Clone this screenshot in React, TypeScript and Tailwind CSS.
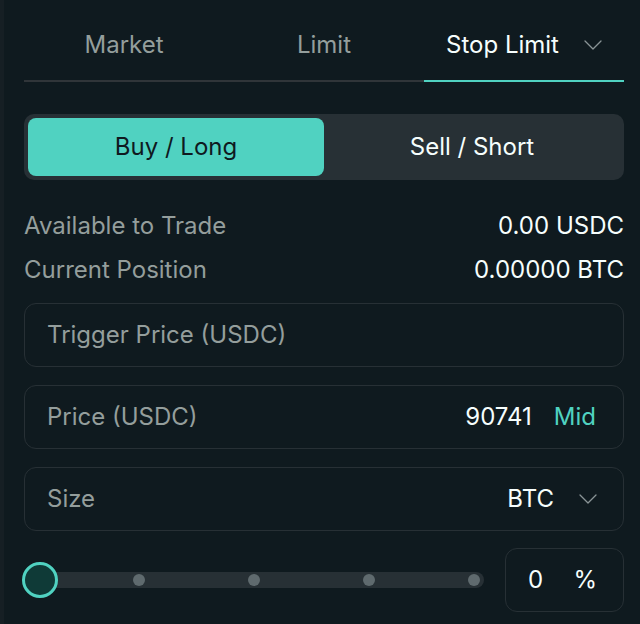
const Chevron = () => (
  <svg width="18" height="10" viewBox="0 0 18 10" fill="none" className="shrink-0">
    <path d="M1 1l8 8 8-8" stroke="#8a9496" strokeWidth="1.3" strokeLinecap="round" strokeLinejoin="round" />
  </svg>
)

const tabs = ["Market", "Limit", "Stop Limit"]

export default function App() {
  return (
    <div
      className="w-[640px] h-[624px] bg-[#0f1a1f] border-l-4 border-[#161f24] pl-5 pr-4 text-[24px] text-[#f6fefd] overflow-hidden"
      style={{ fontFamily: "Inter, 'Liberation Sans', sans-serif" }}
    >
      <div className="flex">
        {tabs.map((t, i) => {
          const active = i === 2
          return (
            <div
              key={t}
              className={
                active
                  ? "flex-1 h-[82px] pt-[10px] flex items-center justify-center gap-[25px] border-b-2 border-[#50d2c1] text-[#f6fefd]"
                  : "flex-1 h-[82px] pt-[10px] flex items-center justify-center border-b-2 border-[#303539] text-[#949e9c]"
              }
            >
              <span>{t}</span>
              {active && <Chevron />}
            </div>
          )
        })}
      </div>

      <div className="mt-8 h-[66px] p-1 rounded-[10px] bg-[#273035] flex">
        <div className="flex-1 rounded-lg bg-[#50d2c1] text-[#0f1a1f] flex items-center justify-center">
          Buy / Long
        </div>
        <div className="flex-1 rounded-lg flex items-center justify-center">Sell / Short</div>
      </div>

      <div className="mt-6">
        <div className="h-11 flex items-center justify-between">
          <span className="text-[#949e9c]">Available to Trade</span>
          <span>0.00 USDC</span>
        </div>
        <div className="h-11 flex items-center justify-between">
          <span className="text-[#949e9c]">Current Position</span>
          <span>0.00000 BTC</span>
        </div>
      </div>

      <div className="mt-[11px] flex flex-col gap-[18px]">
        <div className="h-16 rounded-xl border border-[#273035] flex items-center pl-[22px] pr-[26px]">
          <span className="text-[#949e9c]">Trigger Price (USDC)</span>
        </div>
        <div className="h-16 rounded-xl border border-[#273035] flex items-center justify-between pl-[22px] pr-[27px]">
          <span className="text-[#949e9c]">Price (USDC)</span>
          <div className="flex items-center gap-[22px]">
            <span>90741</span>
            <span className="text-[#50d2c1]">Mid</span>
          </div>
        </div>
        <div className="h-16 rounded-xl border border-[#273035] flex items-center justify-between pl-[22px] pr-[26px]">
          <span className="text-[#949e9c]">Size</span>
          <div className="flex items-center gap-[25px]">
            <span>BTC</span>
            <Chevron />
          </div>
        </div>
      </div>

      <div className="mt-[17px] flex items-center gap-[21px]">
        <div className="flex-1 relative h-4 rounded-full bg-[#273035]">
          <span className="absolute top-[2px] left-[25%] -ml-[6px] w-3 h-3 rounded-full bg-[#5f6a6e]" />
          <span className="absolute top-[2px] left-[50%] -ml-[6px] w-3 h-3 rounded-full bg-[#5f6a6e]" />
          <span className="absolute top-[2px] left-[75%] -ml-[6px] w-3 h-3 rounded-full bg-[#5f6a6e]" />
          <span className="absolute top-[2px] right-1 w-3 h-3 rounded-full bg-[#5f6a6e]" />
          <span className="absolute -top-[10px] -left-[2px] w-9 h-9 rounded-full border-[3px] border-[#50d2c1] bg-[#0f3a37]" />
        </div>
        <div className="w-[119px] h-16 rounded-xl border border-[#273035] flex items-center justify-between pl-[22px] pr-[26px]">
          <span>0</span>
          <span>%</span>
        </div>
      </div>
    </div>
  )
}
